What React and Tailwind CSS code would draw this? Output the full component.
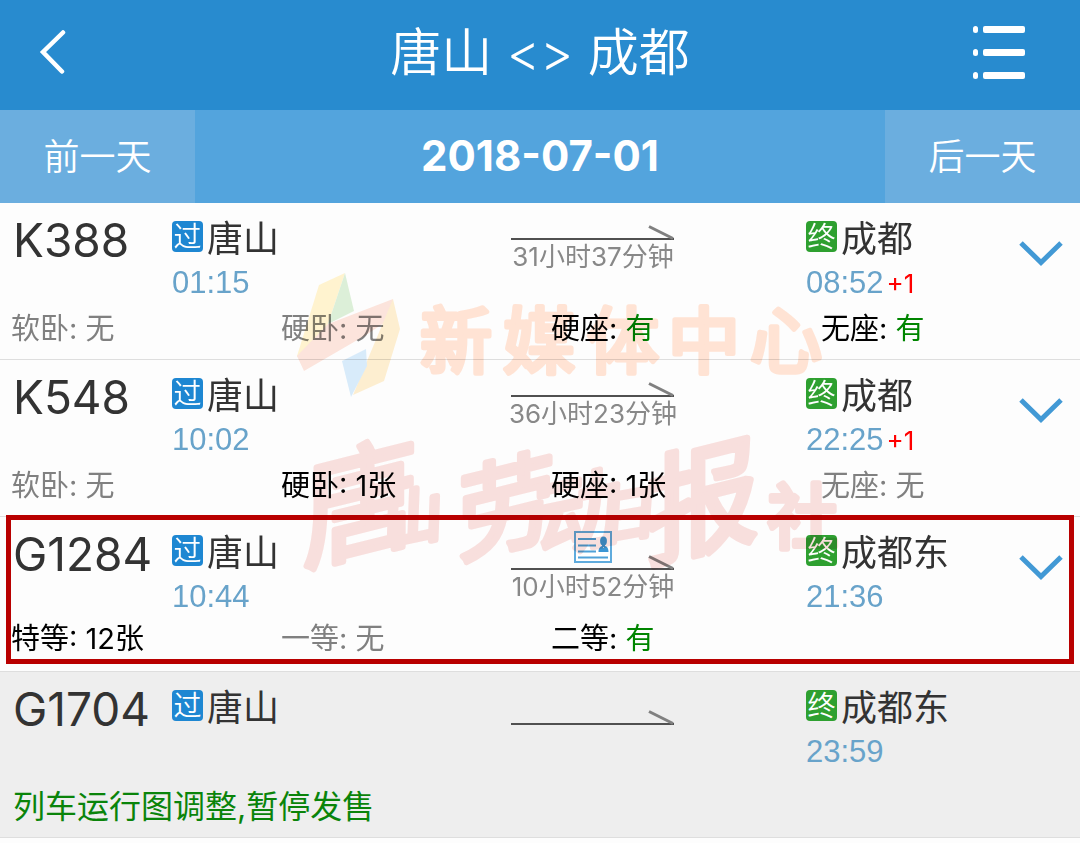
import React from "react";

const trains = [
  {
    no: "K388", from: "唐山", depart: "01:15", to: "成都", arrive: "08:52", plus: "+1", duration: "31小时37分钟",
    seats: [
      { name: "软卧", value: "无" },
      { name: "硬卧", value: "无" },
      { name: "硬座", value: "有" },
      { name: "无座", value: "有" },
    ],
  },
  {
    no: "K548", from: "唐山", depart: "10:02", to: "成都", arrive: "22:25", plus: "+1", duration: "36小时23分钟",
    seats: [
      { name: "软卧", value: "无" },
      { name: "硬卧", value: "1张" },
      { name: "硬座", value: "1张" },
      { name: "无座", value: "无" },
    ],
  },
  {
    no: "G1284", from: "唐山", depart: "10:44", to: "成都东", arrive: "21:36", duration: "10小时52分钟",
    idCard: true, highlighted: true,
    seats: [
      { name: "特等", value: "12张" },
      { name: "一等", value: "无" },
      { name: "二等", value: "有" },
    ],
  },
  {
    no: "G1704", from: "唐山", to: "成都东", arrive: "23:59",
    suspended: "列车运行图调整,暂停发售",
  },
];

function Arrow({ raised }) {
  return (
    <svg viewBox="0 0 164 16" className={`h-4 w-[164px] shrink-0 ${raised ? "-mt-2" : ""}`} fill="none" aria-hidden="true">
      <path d="M0 14H163" stroke="#505050" strokeWidth="2" />
      <path d="M138 1.500L162 13.500" stroke="#808080" strokeWidth="3" />
    </svg>
  );
}

function IdCard() {
  return (
    <svg viewBox="0 0 38 32" className="h-8 w-[38px] shrink-0" fill="none" aria-hidden="true">
      <rect x="1" y="1" width="36" height="30" fill="#fff" stroke="#5fabdd" strokeWidth="2" />
      <path d="M4 8H22M4 14.500H22M4 20.500H22M4 26.500H34" stroke="#4fa1d8" strokeWidth="2" />
      <ellipse cx="29.500" cy="10" rx="3.400" ry="4.500" fill="#3c96d4" />
      <path d="M24.500 21C24.500 17 26.500 15.500 28 15L29.500 17L31 15C33 15.500 34.500 17 34.500 21Z" fill="#3c96d4" />
      <path d="M28 12H31V16H28Z" fill="#3c96d4" />
    </svg>
  );
}

function Station({ badge, badgeClass, name, time, plus }) {
  return (
    <div className="whitespace-nowrap">
      <div className="flex h-[45px] items-start gap-1 pt-1">
        <span className={`flex h-[31px] w-[31px] items-center justify-center rounded text-[28px] font-[350] leading-none text-white ${badgeClass}`}>
          <span>{badge}</span>
        </span>
        <span className="text-4xl leading-9 text-[#333]">{name}</span>
      </div>
      <div className="flex h-[42px] items-center font-['Liberation_Sans',sans-serif] text-[31px] text-[#68a3ca]">
        {time}
        {plus && <span className="ml-[3px] font-[Inter,sans-serif] text-[26px] text-[#ff0000]">{plus}</span>}
      </div>
    </div>
  );
}

function Seat({ name, value }) {
  const none = value === "无";
  return (
    <li className={none ? "text-[#808080]" : "text-black"}>
      {name}: <span className={value === "有" ? "text-[#008500]" : ""}>{value}</span>
    </li>
  );
}

function TrainRow({ train }) {
  return (
    <li className={`relative border-b border-[#dedede] pt-[14px] ${train.suspended ? "bg-[#eee]" : ""}`}>
      <div className="grid grid-cols-[172fr_208fr_426fr_196fr_78fr]">
        <h2 className="pl-[13px] text-[46px] leading-[46px] text-[#333]">{train.no}</h2>
        <Station badge="过" badgeClass="bg-[#1e87d2]" name={train.from} time={train.depart} />
        <div className={`flex flex-col items-center ${train.idCard ? "" : train.suspended ? "pt-6" : "pt-2"}`}>
          {train.idCard && <IdCard />}
          <Arrow raised={train.idCard} />
          <span className="text-[26px] leading-8 text-[#888]">{train.duration}</span>
        </div>
        <Station badge="终" badgeClass="bg-[#2ea030]" name={train.to} time={train.arrive} plus={train.plus} />
        {!train.suspended && (
          <button type="button" aria-label={`展开 ${train.no}`} className="flex h-[74px] items-center justify-center">
            <svg viewBox="0 0 44 26" className="h-[26px] w-11" fill="none" aria-hidden="true">
              <path d="M2 2L22 21.500L42 2" stroke="#4299d5" strokeWidth="5" />
            </svg>
          </button>
        )}
      </div>
      {train.suspended ? (
        <p className="mt-3 px-[13px] pb-2 text-[32px] leading-[44px] text-[#0a840a]">{train.suspended}</p>
      ) : (
        <ul className={`grid grid-cols-4 text-[29px] leading-[42px] [&>li]:pl-[11px] ${train.highlighted ? "pb-[11px]" : "pt-1 pb-[9px]"}`}>
          {train.seats.map((seat) => <Seat key={seat.name} {...seat} />)}
        </ul>
      )}
      {train.highlighted && (
        <div className="pointer-events-none absolute inset-x-[6px] -top-[2px] bottom-[7px] border-[5px] border-[#b90000]" />
      )}
    </li>
  );
}

function Watermark() {
  return (
    <svg viewBox="0 0 1080 470" className="pointer-events-none absolute inset-x-0 top-0 h-[470px] w-full mix-blend-multiply" aria-hidden="true">
      <path d="M345 70L319 82L297 153L303 160L328 121Z" fill="#fff3cf" />
      <path d="M345 70L354 108L328 121Z" fill="#dcefd8" />
      <path d="M297 153L328 121L393 96L393 114L366 132L304 168Z" fill="#fce4dc" />
      <path d="M393 96L400 126L384 178L353 192L367 158Z" fill="#fdeed0" />
      <path d="M342 158L366 146L367 163L351 194Z" fill="#d8ebfa" />
      <g fill="#ffe3d4" stroke="#ffe3d4" strokeWidth="5" strokeLinejoin="round" fontSize="72" fontWeight="400">
        <text x="420" y="164">新</text>
        <text x="503" y="164">媒</text>
        <text x="587" y="164">体</text>
        <text x="668" y="164">中</text>
        <text x="750" y="164">心</text>
      </g>
      <g fill="#f8dfdd" stroke="#f8dfdd" strokeWidth="6" strokeLinejoin="round" fontStyle="italic">
        <text x="290" y="348" fontSize="118" transform="rotate(-14 340 300)">唐</text>
        <text x="378" y="337" fontSize="60" transform="rotate(-12 410 315)">山</text>
        <text x="446" y="344" fontSize="100" transform="rotate(-14 490 300)">劳</text>
        <text x="530" y="343" fontSize="84" transform="rotate(-12 570 310)">动</text>
        <text x="596" y="333" fontSize="56" transform="rotate(-10 625 310)">日</text>
        <text x="634" y="344" fontSize="116" transform="rotate(-14 690 300)">报</text>
        <text x="768" y="340" fontSize="70" fontStyle="normal">社</text>
      </g>
    </svg>
  );
}

export default function App() {
  return (
    <div className="min-h-screen bg-[#fdfdfd] font-[Inter,'Noto_Sans_CJK_SC',sans-serif]">
      <header className="grid h-[110px] grid-cols-[1fr_auto_1fr] items-center bg-[#288bcf] pb-1 text-white">
        <button type="button" aria-label="返回" className="ml-8 flex h-16 w-10 items-center justify-center">
          <svg viewBox="0 0 28 48" className="h-12 w-7" fill="none" aria-hidden="true">
            <path d="M25 3.500L5 23L24 42.500" stroke="#fff" strokeWidth="4.500" strokeLinecap="round" />
          </svg>
        </button>
        <h1 className="text-[51px] font-[350] leading-[60px]">唐山 &lt;&gt; 成都</h1>
        <button type="button" aria-label="菜单" className="mr-[52px] justify-self-end">
          <svg viewBox="0 0 56 56" className="h-14 w-14" fill="#fff" aria-hidden="true">
            <rect x="1" y="1" width="5" height="7" rx="2.500" />
            <rect x="1" y="24" width="5" height="7" rx="2.500" />
            <rect x="1" y="47" width="5" height="7" rx="2.500" />
            <rect x="11" y="1" width="42" height="7" rx="2" />
            <rect x="11" y="24" width="42" height="7" rx="2" />
            <rect x="11" y="47" width="42" height="7" rx="2" />
          </svg>
        </button>
      </header>
      <nav className="grid h-[93px] grid-cols-[195fr_690fr_195fr] bg-[#53a4dd] text-4xl text-white">
        <button type="button" className="bg-[#6baedf] font-[350]">前一天</button>
        <button type="button" className="text-[42px] font-bold">2018-07-01</button>
        <button type="button" className="bg-[#6baedf] font-[350]">后一天</button>
      </nav>
      <main className="relative isolate">
        <ul>
          {trains.map((train) => <TrainRow key={train.no} train={train} />)}
        </ul>
        <Watermark />
      </main>
    </div>
  );
}
